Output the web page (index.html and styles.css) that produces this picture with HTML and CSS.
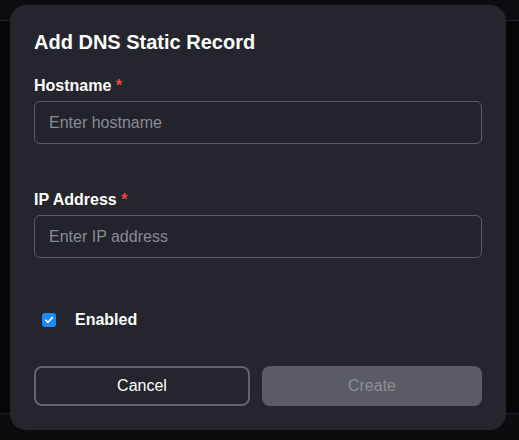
FILE: index.html
```html
<!DOCTYPE html>
<html>
<head>
<meta charset="utf-8">
<link rel="stylesheet" href="styles.css">
</head>
<body>
<div class="page">
  <div class="page-header"></div>
  <div class="page-main"></div>
  <div class="page-footer"></div>
</div>
<div class="overlay">
  <div class="modal">
    <h2 class="title">Add DNS Static Record</h2>
    <div class="field">
      <label class="label">Hostname <span class="req">*</span></label>
      <input class="input" type="text" placeholder="Enter hostname">
    </div>
    <div class="field field-second">
      <label class="label">IP Address <span class="req">*</span></label>
      <input class="input" type="text" placeholder="Enter IP address">
    </div>
    <label class="check-row">
      <span class="checkbox">
        <svg width="10" height="10" viewBox="0 0 10 10"><path d="M1.8 5.2 L4 7.3 L8.3 2.6" fill="none" stroke="#fff" stroke-width="1.6" stroke-linecap="round" stroke-linejoin="round"/></svg>
      </span>
      <span class="check-label">Enabled</span>
    </label>
    <div class="actions">
      <button class="btn btn-cancel">Cancel</button>
      <button class="btn btn-create" disabled>Create</button>
    </div>
  </div>
</div>
</body>
</html>
```
FILE: styles.css
```css
* { box-sizing: border-box; }
html, body { margin: 0; padding: 0; }
body {
  width: 519px;
  height: 440px;
  overflow: hidden;
  background: #08080b;
  font-family: "Liberation Sans", Arial, sans-serif;
  position: relative;
}
.page { display: flex; flex-direction: column; height: 440px; }
.page-header { height: 21px; background: #0d0d11; border-bottom: 1px solid #22222a; }
.page-main { flex: 1; background: #060608; }
.page-footer { height: 27px; background: #0c0c0f; border-top: 1px solid #1e1e25; }
.overlay {
  position: absolute;
  inset: 0;
  padding: 5px 13px 10px 10px;
}
.modal {
  width: 496px;
  height: 425px;
  background: #25252d;
  border-radius: 16px;
  padding: 23px 24px 24px;
}
.title {
  margin: 0 0 20px;
  font-size: 20px;
  line-height: 28px;
  font-weight: 700;
  color: #ffffff;
}
.field { display: flex; flex-direction: column; }
.field-second { margin-top: 46px; }
.label {
  font-size: 16px;
  line-height: 20px;
  font-weight: 700;
  color: #ffffff;
  margin-bottom: 5px;
}
.req { color: #ef4444; }
.input {
  height: 43px;
  width: 100%;
  background: #23232b;
  border: 1px solid #5c5c66;
  border-radius: 6px;
  padding: 0 14px;
  font-family: inherit;
  font-size: 16px;
  color: #fff;
  outline: none;
}
.input::placeholder { color: #8b8b94; }
.check-row {
  display: flex;
  align-items: center;
  height: 20px;
  margin-top: 52px;
  padding-left: 8px;
}
.checkbox {
  width: 14px;
  height: 14px;
  border-radius: 3px;
  background: #1f8af5;
  display: flex;
  align-items: center;
  justify-content: center;
}
.check-label {
  margin-left: 19px;
  font-size: 16px;
  font-weight: 700;
  color: #ffffff;
}
.actions {
  display: flex;
  gap: 12px;
  margin-top: 36px;
}
.btn {
  height: 40px;
  border-radius: 8px;
  font-family: inherit;
  font-size: 16px;
  padding: 0;
}
.btn-cancel {
  flex: 0 0 216px;
  background: transparent;
  border: 2px solid #64646d;
  color: #ffffff;
}
.btn-create {
  flex: 1 1 0;
  background: #5b5b63;
  border: none;
  color: #8f8f96;
}
```
